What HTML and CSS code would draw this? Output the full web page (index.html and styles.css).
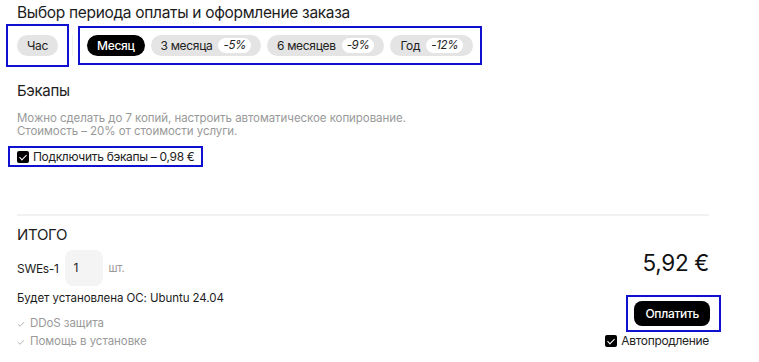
FILE: index.html
```html
<!DOCTYPE html>
<html lang="ru">

<head>
    <meta charset="UTF-8">
    <title>Оформление заказа</title>
    <link rel="stylesheet" href="styles.css">
</head>

<body>
    <div class="container">
        <h2 class="page-title">Выбор периода оплаты и оформление заказа</h2>

        <div class="periods">
            <div class="period-group marked">
                <button class="pill" type="button">Час</button>
            </div>
            <div class="period-divider"></div>
            <div class="period-group marked">
                <button class="pill active" type="button">Месяц</button>
                <button class="pill" type="button">3 месяца <span class="discount">-5%</span></button>
                <button class="pill" type="button">6 месяцев <span class="discount">-9%</span></button>
                <button class="pill" type="button">Год <span class="discount">-12%</span></button>
            </div>
        </div>

        <section class="backups">
            <h3 class="section-title">Бэкапы</h3>
            <p class="muted-text">Можно сделать до 7 копий, настроить автоматическое копирование.<br>Стоимость – 20% от стоимости услуги.</p>
            <label class="check marked">
                <span class="check-box"></span>
                Подключить бэкапы – 0,98 €
            </label>
        </section>

        <hr class="separator">

        <section class="total">
            <div class="total-info">
                <h3 class="total-title">ИТОГО</h3>
                <div class="qty-row">
                    <span>SWEs-1</span>
                    <span class="qty-input">1</span>
                    <span class="qty-unit">шт.</span>
                </div>
                <p class="os-text">Будет установлена ОС: Ubuntu 24.04</p>
                <ul class="features">
                    <li><svg class="tick" viewBox="0 0 10 8"><path d="M1 4.5 L3.8 7 L9 1.5" /></svg>DDoS защита</li>
                    <li><svg class="tick" viewBox="0 0 10 8"><path d="M1 4.5 L3.8 7 L9 1.5" /></svg>Помощь в установке</li>
                </ul>
            </div>
            <div class="total-pay">
                <div class="price">5,92 €</div>
                <div class="pay-wrap marked">
                    <button class="pay-button" type="button">Оплатить</button>
                </div>
                <label class="check">
                    <span class="check-box"></span>
                    Автопродление
                </label>
            </div>
        </section>
    </div>
</body>

</html>
```

FILE: styles.css
```css
body {
    margin: 0;
    font-family: Inter, 'Liberation Sans', Arial, sans-serif;
    letter-spacing: -0.02em;
    color: #1c1c1c;
    background: #fff;
}

.container {
    width: 692px;
    padding: 4px 0 0 17px;
}

.page-title {
    margin: 0;
    font-size: 15.5px;
    font-weight: 400;
    line-height: 18px;
}

.marked {
    outline: 2px solid #1010d0;
}

.periods {
    display: flex;
    align-items: center;
    margin-top: 13px;
    height: 21px;
}

.period-group {
    display: flex;
    gap: 6px;
    outline-offset: 7px;
}

.period-group:first-child {
    outline-offset: 9px;
}

.period-divider {
    width: 1px;
    height: 21px;
    background: #f0f0f0;
    margin: 0 14px;
}

.pill {
    display: flex;
    align-items: center;
    gap: 6px;
    height: 21px;
    padding: 0 10px;
    border: none;
    border-radius: 11px;
    background: #e4e4e4;
    color: #222;
    font-family: inherit;
    font-size: 12px;
    letter-spacing: inherit;
    cursor: pointer;
}

.pill.active {
    background: #000;
    color: #fff;
    font-weight: 500;
}

.discount {
    display: inline-block;
    height: 15px;
    line-height: 15px;
    padding: 0 5px;
    border-radius: 8px;
    background: #fff;
    font-style: italic;
    font-size: 11.5px;
}

.backups {
    margin-top: 26px;
}

.section-title {
    margin: 0;
    font-size: 15px;
    font-weight: 400;
    line-height: 18px;
}

.muted-text {
    margin: 12px 0 0;
    font-size: 11.5px;
    line-height: 13px;
    letter-spacing: -0.005em;
    color: #999;
}

.check {
    display: inline-flex;
    align-items: center;
    gap: 4px;
    font-size: 12px;
    color: #222;
}

.backups .check {
    margin-top: 8px;
    padding: 3px 8px 3px 9px;
    margin-left: -9px;
    outline-offset: -2px;
}

.check-box {
    position: relative;
    width: 12px;
    height: 12px;
    border-radius: 2px;
    background: #000;
}

.check-box::after {
    content: '';
    position: absolute;
    left: 4px;
    top: 2px;
    width: 3px;
    height: 6px;
    border: solid #fff;
    border-width: 0 1.2px 1.2px 0;
    transform: rotate(45deg);
}

.separator {
    margin: 47px 0 0;
    border: none;
    border-top: 2px solid #f2f2f2;
}

.total {
    display: flex;
    justify-content: space-between;
}

.total-title {
    margin: 10px 0 0;
    font-size: 15px;
    font-weight: 400;
    line-height: 18px;
}

.qty-row {
    display: flex;
    align-items: center;
    gap: 6px;
    margin-top: 6px;
    font-size: 12px;
}

.qty-input {
    width: 29px;
    height: 36px;
    line-height: 36px;
    padding-left: 9px;
    border-radius: 8px;
    background: #f4f4f4;
}

.qty-unit {
    color: #999;
    font-size: 11px;
}

.os-text {
    margin: 5px 0 0;
    font-size: 11.5px;
    line-height: 14px;
    letter-spacing: -0.005em;
}

.features {
    margin: 9px 0 0;
    padding: 0;
    list-style: none;
    font-size: 11.5px;
    line-height: 18px;
    letter-spacing: -0.005em;
    color: #999;
}

.tick {
    width: 8px;
    height: 6px;
    margin-right: 5px;
    fill: none;
    stroke: #aaa;
    stroke-width: 1.2;
}

.total-pay {
    display: flex;
    flex-direction: column;
    align-items: flex-end;
    padding-top: 34px;
}

.price {
    font-size: 22.5px;
    line-height: 26px;
    color: #111;
}

.pay-wrap {
    margin-top: 21px;
    padding: 4px 9px 4px 6px;
    margin-right: -10px;
    display: flex;
}

.pay-button {
    height: 25px;
    padding: 0 11px;
    border: none;
    border-radius: 8px;
    background: #000;
    color: #fff;
    font-family: inherit;
    letter-spacing: inherit;
    font-size: 12px;
    font-weight: 500;
    cursor: pointer;
}

.total-pay .check {
    margin-top: 3px;
}
```
